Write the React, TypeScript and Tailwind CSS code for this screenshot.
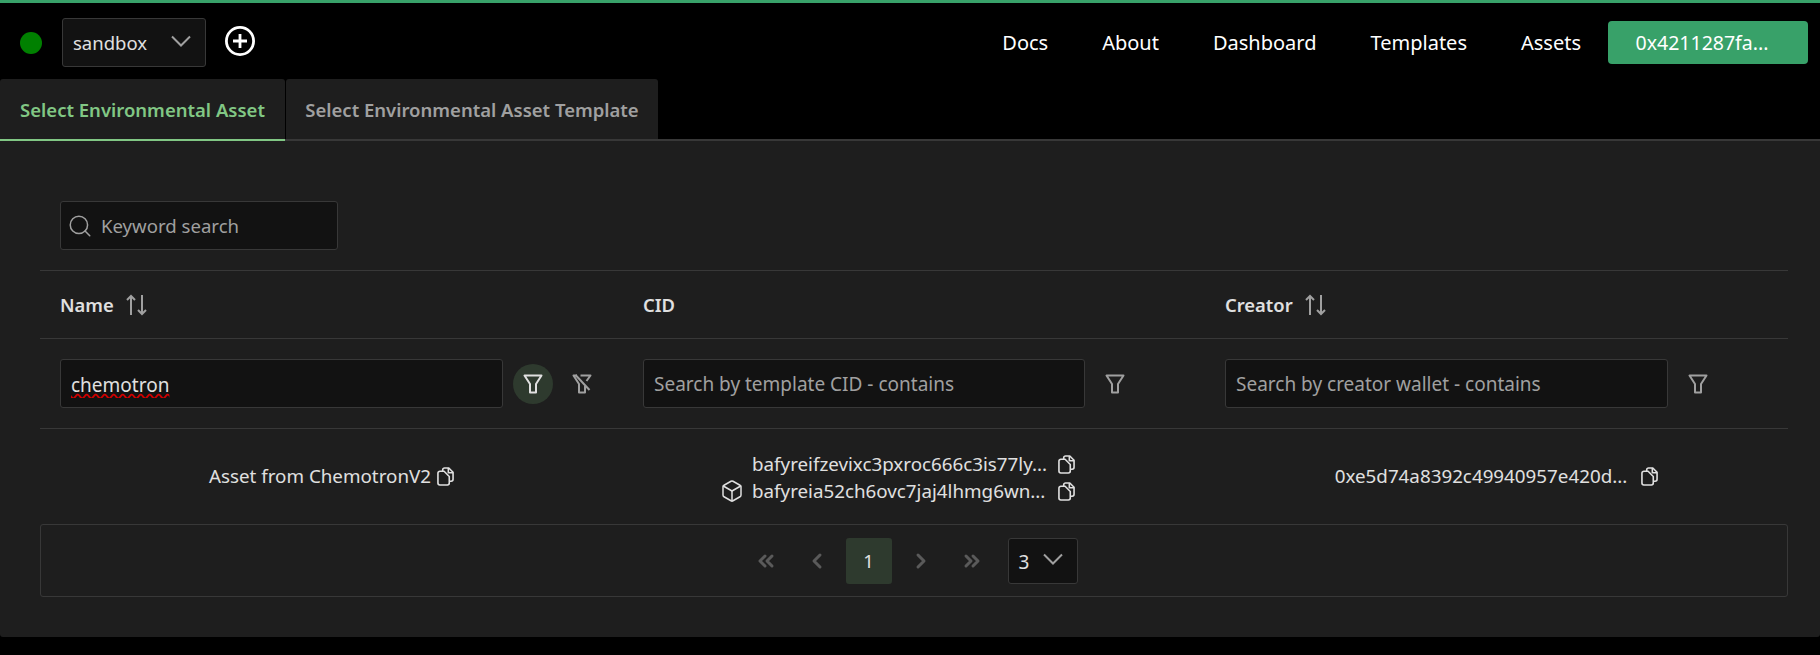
import { Box, ChevronLeft, ChevronRight, ChevronsLeft, ChevronsRight, Search } from 'lucide-react';
import type { JSX } from 'react';

const navLinks = ['Docs', 'About', 'Dashboard', 'Templates', 'Assets'];

function FilterIcon({ className }: { className: string }): JSX.Element {
  return (
    <svg viewBox="0 0 20 20" fill="none" stroke="currentColor" strokeWidth="2" strokeLinejoin="round" className={className}>
      <path d="M1.5 1.5h17L13 10v8.5H7V10z" />
    </svg>
  );
}

function FilterSlashIcon({ className }: { className: string }): JSX.Element {
  return (
    <svg viewBox="0 0 20 20" fill="none" stroke="currentColor" strokeWidth="2" strokeLinejoin="round" className={className}>
      <path d="M8.5 1.5h10L14.5 7M5 1.5H1.5L7 10v8.5h6V12" />
      <path d="M3.5 1l14 15" />
    </svg>
  );
}

function CopyIcon({ className }: { className: string }): JSX.Element {
  return (
    <svg viewBox="0 0 18 20" fill="none" stroke="currentColor" strokeWidth="1.7" strokeLinejoin="round" className={className}>
      <path d="M6 4.5V3a2 2 0 0 1 2-2h4.5L17 5.5V13a2 2 0 0 1-2 2h-2" />
      <path d="M12 1v5h5" />
      <path d="M3 4.5h4.5L13 10v7a2 2 0 0 1-2 2H3a2 2 0 0 1-2-2V6.5a2 2 0 0 1 2-2z" />
    </svg>
  );
}

function SortIcon(): JSX.Element {
  return (
    <svg viewBox="0 0 21 22" fill="none" stroke="currentColor" strokeWidth="2" className="h-[22px] w-[21px] text-[#a0a0a0]">
      <path d="M5 21V2M1 6l4-4 4 4" />
      <path d="M16 1v19M12 16l4 4 4-4" />
    </svg>
  );
}

function SelectChevron(): JSX.Element {
  return (
    <svg viewBox="0 0 20 12" fill="none" stroke="currentColor" strokeWidth="2" className="mb-[3px] h-3 w-5 text-[#a0a0a0]">
      <path d="M1 1.5l9 9 9-9" />
    </svg>
  );
}

function Header(): JSX.Element {
  return (
    <header className="flex h-[79px] items-start justify-between border-t-[3px] border-[#38a169] bg-black">
      <div className="flex items-center pt-[15px] pl-5">
        <span className="h-[22px] w-[22px] rounded-full bg-[#008000]" />
        <button type="button" className="ml-5 flex h-[49px] w-[144px] items-center justify-between rounded-[3px] border border-[#383838] bg-[#121212] pr-[14px] pl-[10px] text-[18.5px] text-[#e0e0e0]">
          <span className="pt-px">sandbox</span>
          <SelectChevron />
        </button>
        <svg viewBox="0 0 30 30" fill="none" stroke="#fff" strokeWidth="2.8" className="mb-1 ml-[19px] h-[30px] w-[30px]">
          <circle cx="15" cy="15" r="13.6" />
          <path d="M15 8v14M8 15h14" />
        </svg>
      </div>
      <nav className="flex items-center pt-[18px] pr-3">
        <div className="mr-[27px] flex gap-[54px]">
          {navLinks.map((link) => (
            <a key={link} className="text-[20px] text-white">
              {link}
            </a>
          ))}
        </div>
        <button type="button" className="h-[43px] w-[200px] rounded-[4px] bg-[#38a169] pr-[12px] text-[19.5px] text-white">
          0x4211287fa...
        </button>
      </nav>
    </header>
  );
}

function Tabs(): JSX.Element {
  return (
    <div className="flex h-[62px] border-b-2 border-[#383838] bg-black">
      <div className="-mb-0.5 flex w-[285px] items-center justify-center rounded-t-[3px] border-b-2 border-[#81c784] bg-[#1e1e1e] pt-px text-[18.5px] font-semibold text-[#81c784]">
        Select Environmental Asset
      </div>
      <div className="ml-px flex w-[372px] items-center justify-center rounded-t-[3px] bg-[#1e1e1e] pt-px text-[18.5px] font-semibold text-[#a0a0a0]">
        Select Environmental Asset Template
      </div>
    </div>
  );
}

function TextFilter({ placeholder, className }: { placeholder: string; className: string }): JSX.Element {
  return (
    <input
      placeholder={placeholder}
      className={`h-[49px] rounded-[3px] border border-[#383838] bg-[#121212] px-[10px] pt-px text-[19px] text-[#e0e0e0] outline-none placeholder:text-[#a0a0a0] ${className}`}
    />
  );
}

function Paginator(): JSX.Element {
  return (
    <div className="flex h-[73px] items-center justify-center rounded-[3px] border border-[#383838] pr-[8px]">
      <div className="flex items-center text-[#5a5a5a]">
        <span className="flex w-[46px] justify-center"><ChevronsLeft className="h-6 w-6" strokeWidth={3} /></span>
        <span className="ml-[5px] flex w-[46px] justify-center"><ChevronLeft className="h-6 w-6" strokeWidth={3} /></span>
        <span className="mx-[6px] flex h-[46px] w-[46px] items-center justify-center rounded-[3px] bg-[#2e3a2e] text-[18.5px] text-[#e0e0e0]">1</span>
        <span className="flex w-[46px] justify-center"><ChevronRight className="h-6 w-6" strokeWidth={3} /></span>
        <span className="ml-[5px] flex w-[46px] justify-center"><ChevronsRight className="h-6 w-6" strokeWidth={3} /></span>
        <span className="ml-[13px] flex h-[46px] w-[70px] items-center justify-between rounded-[3px] border border-[#383838] bg-[#121212] pr-[14px] pl-[10px] text-[19px] text-[#e0e0e0]">
          <span className="pt-[3px]">3</span>
          <SelectChevron />
        </span>
      </div>
    </div>
  );
}

function AssetTable(): JSX.Element {
  return (
    <div className="ml-10 mr-8 text-[#e0e0e0]">
      <div className="flex h-[92px] items-center border-b border-[#383838] pt-[2px] pl-5">
        <div className="flex h-[49px] w-[278px] items-center rounded-[3px] border border-[#383838] bg-[#121212] pl-[6px]">
          <Search className="h-[26px] w-[26px] text-[#a0a0a0]" strokeWidth={1.4} />
          <span className="ml-2 pt-px text-[18.6px] text-[#a0a0a0]">Keyword search</span>
        </div>
      </div>

      <div className="grid h-[68px] grid-cols-[583px_582px_583px] items-center border-b border-[#383838]">
        {['Name', 'CID', 'Creator'].map((col) => (
          <div key={col} className="flex items-center gap-[12px] pt-px pl-5 text-[18.4px] font-semibold">
            {col}
            {col !== 'CID' && <SortIcon />}
          </div>
        ))}
      </div>

      <div className="grid h-[90px] grid-cols-[583px_582px_583px] items-center border-b border-[#383838]">
        <div className="flex items-center pl-5">
          <input
            readOnly
            defaultValue="chemotron"
            className="h-[49px] w-[443px] rounded-[3px] border border-[#383838] bg-[#121212] px-[10px] pt-[3px] text-[19px] text-[#e0e0e0] underline decoration-[#d00000] decoration-wavy outline-none"
          />
          <span className="ml-[10px] flex h-10 w-10 items-center justify-center rounded-full bg-[#2e3a2e]">
            <FilterIcon className="h-5 w-5 text-[#e0e0e0]" />
          </span>
          <FilterSlashIcon className="ml-[19px] h-5 w-5 text-[#a0a0a0]" />
        </div>
        <div className="flex items-center pl-5">
          <TextFilter placeholder="Search by template CID - contains" className="w-[442px]" />
          <FilterIcon className="ml-5 h-5 w-5 text-[#a0a0a0]" />
        </div>
        <div className="flex items-center pl-5">
          <TextFilter placeholder="Search by creator wallet - contains" className="w-[443px]" />
          <FilterIcon className="ml-5 h-5 w-5 text-[#a0a0a0]" />
        </div>
      </div>

      <div className="grid h-[95px] grid-cols-[583px_582px_583px] items-center text-[18.8px]">
        <div className="flex items-center justify-center gap-[6px]">
          Asset from ChemotronV2
          <CopyIcon className="h-[19px] w-[17px]" />
        </div>
        <div className="flex flex-col items-end pt-[2px] pr-[130px] leading-[27px]">
          <div className="flex items-center">
            <span className="w-[306px]">bafyreifzevixc3pxroc666c3is77ly...</span>
            <CopyIcon className="h-[19px] w-[17px]" />
          </div>
          <div className="flex items-center">
            <Box className="mr-2 h-[24px] w-[24px]" strokeWidth={1.5} />
            <span className="w-[306px]">bafyreia52ch6ovc7jaj4lhmg6wn...</span>
            <CopyIcon className="h-[19px] w-[17px]" />
          </div>
        </div>
        <div className="flex items-center justify-center gap-[14px]">
          0xe5d74a8392c49940957e420d...
          <CopyIcon className="h-[19px] w-[17px]" />
        </div>
      </div>

      <Paginator />
    </div>
  );
}

export default function App(): JSX.Element {
  return (
    <div className="h-[655px] overflow-hidden bg-black font-['Noto_Sans',sans-serif]">
      <Header />
      <Tabs />
      <main className="h-[496px] rounded-b-[3px] bg-[#1e1e1e] pt-[38px]">
        <AssetTable />
      </main>
    </div>
  );
}
